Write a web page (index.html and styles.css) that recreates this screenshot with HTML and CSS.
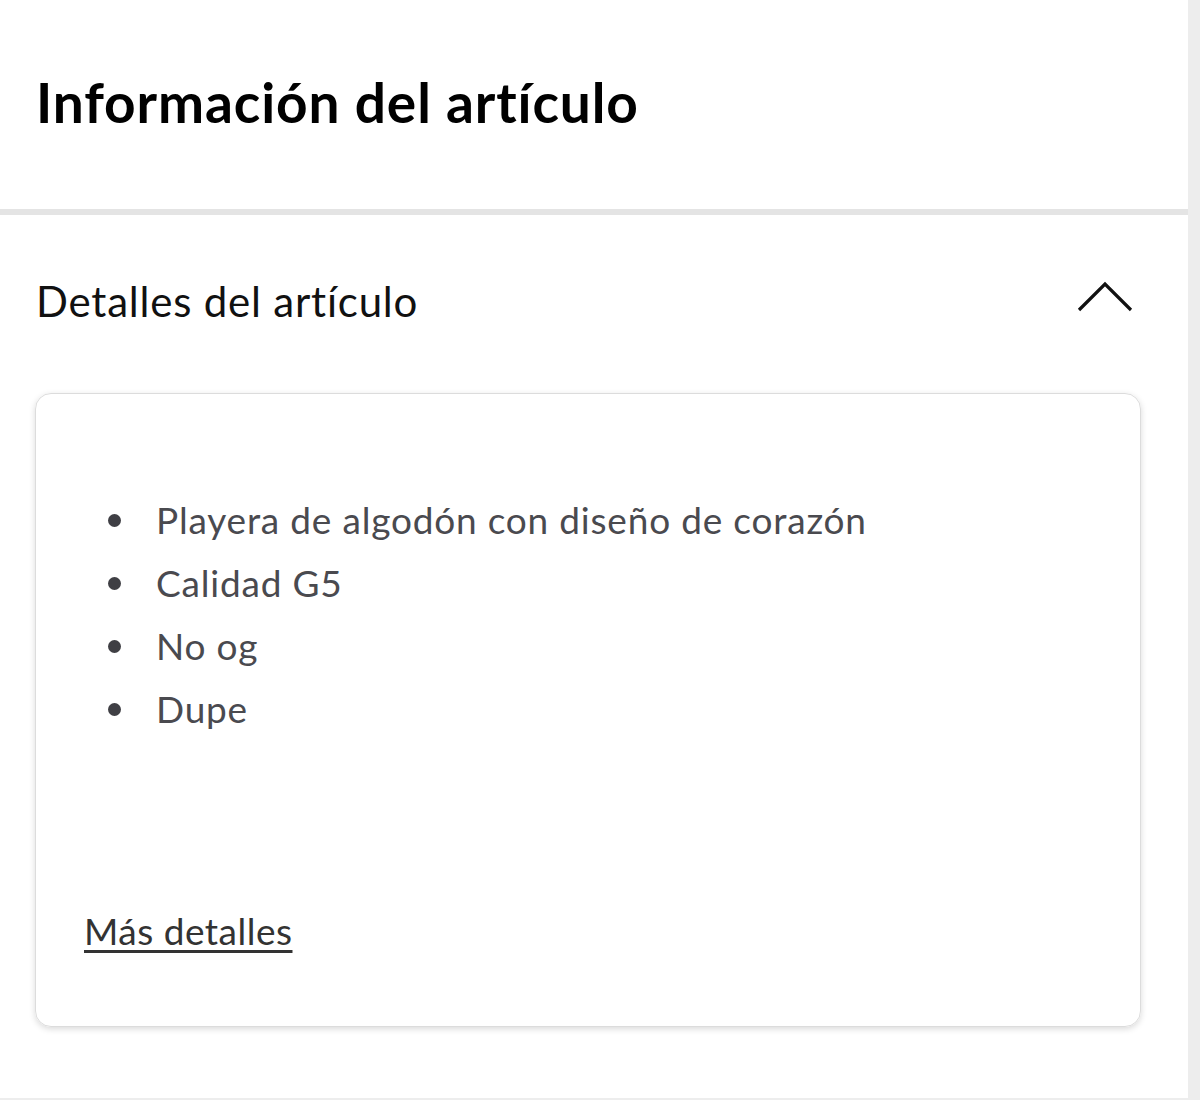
FILE: index.html
```html
<!DOCTYPE html>
<html lang="es">
<head>
<meta charset="utf-8">
<title>Información del artículo</title>
<link rel="stylesheet" href="styles.css">
</head>
<body>
<div class="page">
  <header class="top">
    <h1 class="title">Información del artículo</h1>
  </header>
  <div class="divider"></div>
  <section class="details">
    <div class="details-head">
      <h2 class="details-title">Detalles del artículo</h2>
      <svg class="chevron" width="56" height="32" viewBox="0 0 56 32" aria-hidden="true">
        <polyline points="2,29 28,3 54,29" fill="none" stroke="#111" stroke-width="3.2"/>
      </svg>
    </div>
    <div class="card">
      <ul class="list">
        <li>Playera de algodón con diseño de corazón</li>
        <li>Calidad G5</li>
        <li>No og</li>
        <li>Dupe</li>
      </ul>
      <a class="more" href="#">Más detalles</a>
    </div>
  </section>
</div>
</body>
</html>
```

FILE: styles.css
```css
html, body {
  margin: 0;
  padding: 0;
  background: #ffffff;
}
body {
  font-family: Lato, "Noto Sans", sans-serif;
  width: 1200px;
  height: 1100px;
  overflow: hidden;
}
.page {
  width: 1188px;
  height: 1098px;
  border-right: 12px solid #ededed;
  border-bottom: 2px solid #ededed;
  background: #fff;
}
.top {
  height: 209px;
  padding-left: 36px;
  box-sizing: border-box;
}
.title {
  margin: 0;
  padding-top: 72px;
  font-size: 55px;
  line-height: 60px;
  font-weight: 700;
  color: #000;
  letter-spacing: 0.9px;
}
.divider {
  height: 6px;
  background: #e4e4e4;
}
.details {
  padding: 0 47px 0 35px;
}
.details-head {
  display: flex;
  align-items: center;
  justify-content: space-between;
  height: 178px;
  padding-left: 1px;
  padding-right: 8px;
  box-sizing: border-box;
  padding-bottom: 6px;
}
.details-title {
  margin: 0;
  font-size: 42px;
  font-weight: 400;
  color: #111;
  letter-spacing: 0.8px;
}
.chevron {
  display: block;
  margin-top: -8px;
}
.card {
  height: 634px;
  box-sizing: border-box;
  border: 1px solid #dcdcdc;
  border-radius: 16px;
  box-shadow: 0 2px 6px rgba(0,0,0,0.15);
  padding: 94px 48px 0 48px;
  display: flex;
  flex-direction: column;
}
.list {
  margin: 0;
  padding: 0 0 0 72px;
  list-style: none;
}
.list li {
  position: relative;
  font-size: 37px;
  line-height: 63px;
  color: #4a4a4f;
  letter-spacing: 0.8px;
}
.list li::before {
  content: "";
  position: absolute;
  left: -48px;
  top: 26px;
  width: 13px;
  height: 13px;
  border-radius: 50%;
  background: #3f3f44;
}
.more {
  margin-top: 171px;
  align-self: flex-start;
  font-size: 37px;
  line-height: 40px;
  color: #333;
  letter-spacing: 0.5px;
  text-decoration: underline;
  text-decoration-thickness: 3px;
  text-underline-offset: 5px;
}
```
